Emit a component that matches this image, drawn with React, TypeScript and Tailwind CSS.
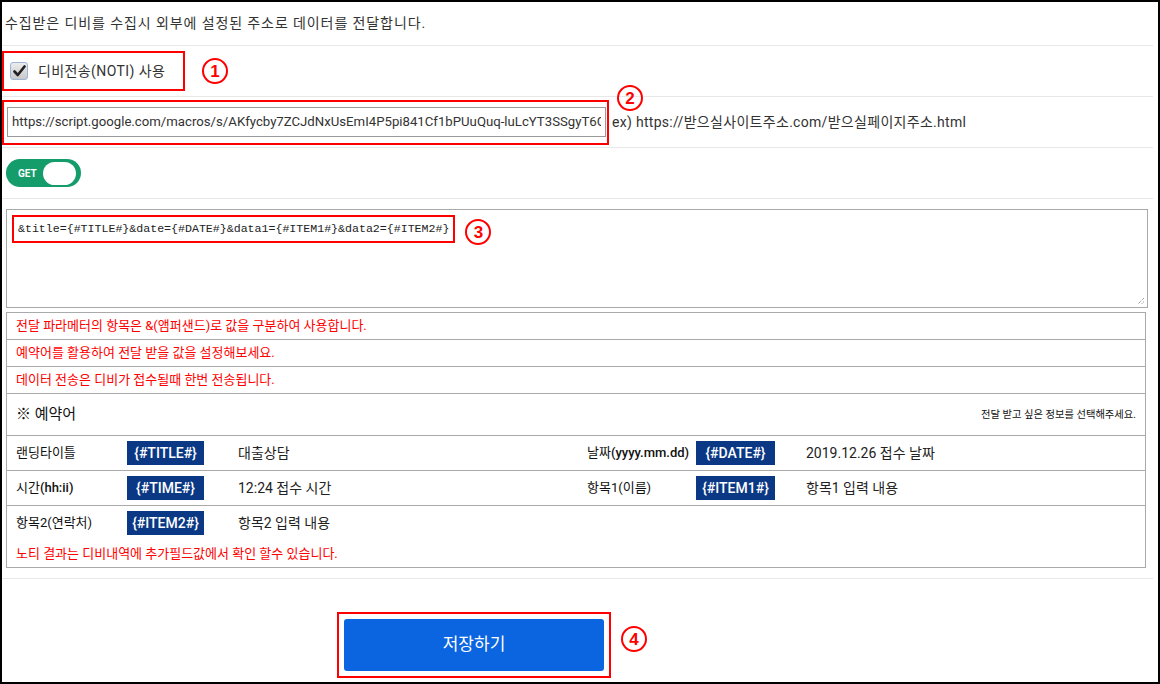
import React from "react";

const CircleNum = ({ n }: { n: string }) => (
  <span className="inline-flex h-[26px] w-[26px] items-center justify-center rounded-full border-[2.5px] border-[#ff0000] text-[17px] font-bold leading-none text-[#ff0000] font-['Liberation_Sans',sans-serif]">
    {n}
  </span>
);

const Badge = ({ children, w }: { children: React.ReactNode; w: string }) => (
  <div className={`${w} flex h-[24px] items-center justify-center bg-[#0a3885] text-[14px] font-medium text-white`}>
    {children}
  </div>
);

// latin runs in the labels look bolder than the hangul
const Label = ({ text }: { text: string }) => {
  const parts = text.split(/([A-Za-z:.()]+[A-Za-z:.()]*)/).filter(Boolean);
  return (
    <>
      {parts.map((p, i) =>
        /[A-Za-z]/.test(p) ? (
          <span key={i} className="font-medium">
            {p}
          </span>
        ) : (
          <span key={i}>{p}</span>
        )
      )}
    </>
  );
};

const RESERVED = [
  [
    { label: "랜딩타이틀", code: "{#TITLE#}", value: "대출상담" },
    { label: "날짜(yyyy.mm.dd)", code: "{#DATE#}", value: "2019.12.26 접수 날짜" },
  ],
  [
    { label: "시간(hh:ii)", code: "{#TIME#}", value: "12:24 접수 시간" },
    { label: "항목1(이름)", code: "{#ITEM1#}", value: "항목1 입력 내용" },
  ],
  [{ label: "항목2(연락처)", code: "{#ITEM2#}", value: "항목2 입력 내용" }],
];

export default function App() {
  return (
    <div className="box-border h-[684px] w-[1160px] overflow-hidden border-2 border-black bg-white font-['Roboto','Noto_Sans_CJK_KR',sans-serif] text-[#222]">
      <div className="pr-[5px]">
        {/* intro */}
        <div className="flex h-[44px] items-center border-b border-[#e8e8e8] pl-[3px] text-[14px] tracking-[0.9px] text-[#333]">
          수집받은 디비를 수집시 외부에 설정된 주소로 데이터를 전달합니다.
        </div>

        {/* noti checkbox */}
        <div className="flex h-[51px] items-center border-b border-[#e8e8e8]">
          <div className="flex h-[40px] w-[183px] items-center gap-[10px] border-2 border-[#ff0000] pl-[6px]">
            <div className="flex h-[18px] w-[18px] items-center justify-center rounded-[3px] border border-[#9db6d8] bg-gradient-to-b from-[#ececec] to-[#c9c9c9]">
              <svg width="13" height="12" viewBox="0 0 13 12">
                <path d="M1.5 6.5 L4.8 10 L11.5 1.5" fill="none" stroke="#222" strokeWidth="2.6" strokeLinecap="round" strokeLinejoin="round" />
              </svg>
            </div>
            <span className="text-[14px] tracking-[0.4px] text-[#333]">디비전송(NOTI) 사용</span>
          </div>
          <div className="ml-[17px]">
            <CircleNum n="1" />
          </div>
        </div>

        {/* url */}
        <div className="relative flex h-[51px] items-center border-b border-[#e8e8e8]">
          <div className="flex h-[45px] w-[607px] items-start border-2 border-[#ff0000] pl-[3px] pt-[5px]">
            <input
              readOnly
              value="https://script.google.com/macros/s/AKfycby7ZCJdNxUsEmI4P5pi841Cf1bPUuQuq-luLcYT3SSgyT6G/exec"
              className="h-[30px] w-[599px] border border-[#999] bg-white px-[4px] text-[13.2px] text-[#333] outline-none"
            />
          </div>
          <span className="ml-[3px] text-[14px] tracking-[0.3px] text-[#333]">ex) https://받으실사이트주소.com/받으실페이지주소.html</span>
          <div className="absolute left-[615px] top-[-12px]">
            <CircleNum n="2" />
          </div>
        </div>

        {/* method toggle */}
        <div className="flex h-[51px] items-center border-b border-[#e8e8e8] pl-[4px]">
          <div className="flex h-[28px] w-[75px] items-center justify-between rounded-full bg-[#149c6b] pl-[12px] pr-[5px]">
            <span className="text-[10px] font-bold text-white">GET</span>
            <span className="h-[23px] w-[33px] rounded-full bg-white" />
          </div>
        </div>

        {/* params */}
        <div className="border-b border-[#e8e8e8] px-[4px] pb-[10px] pt-[10px]">
          <div className="relative h-[99px] w-[1142px] border border-[#a9a9a9] p-[5px]">
            <div className="flex items-start gap-[10px]">
              <div className="flex h-[28px] items-center border-2 border-[#ff0000] px-[4px] font-['Liberation_Mono',monospace] text-[11.6px] text-[#222]">
                &amp;title={"{#TITLE#}"}&amp;date={"{#DATE#}"}&amp;data1={"{#ITEM1#}"}&amp;data2={"{#ITEM2#}"}
              </div>
              <div className="mt-[4px]">
                <CircleNum n="3" />
              </div>
            </div>
            <svg className="absolute bottom-[2px] right-[2px]" width="9" height="9" viewBox="0 0 9 9">
              <path d="M8 2 L2 8 M8 5.5 L5.5 8" stroke="#777" strokeWidth="1" strokeDasharray="1 1" />
            </svg>
          </div>

          <div className="mt-[4px] w-[1140px] border border-[#aaa] text-[13px]">
            <div className="flex h-[27px] items-center border-b border-[#aaa] pl-[9px] text-[#ff0000]">
              전달 파라메터의 항목은 &amp;(앰퍼샌드)로 값을 구분하여 사용합니다.
            </div>
            <div className="flex h-[27px] items-center border-b border-[#aaa] pl-[9px] text-[#ff0000]">
              예약어를 활용하여 전달 받을 값을 설정해보세요.
            </div>
            <div className="flex h-[27px] items-center border-b border-[#aaa] pl-[9px] text-[#ff0000]">
              데이터 전송은 디비가 접수될때 한번 전송됩니다.
            </div>
            <div className="flex h-[42px] items-center justify-between border-b border-[#aaa] pl-[9px] pr-[9px]">
              <span className="text-[15px] text-[#111]">※ 예약어</span>
              <span className="text-[10.3px] text-[#111]">전달 받고 싶은 정보를 선택해주세요.</span>
            </div>
            {RESERVED.map((row, i) => (
              <div key={i} className={i < RESERVED.length - 1 ? "border-b border-[#aaa]" : ""}>
                <div className="grid h-[34px] grid-cols-2 items-center">
                  {row.map((item, j) => (
                    <div key={item.label} className={`flex items-center ${j === 0 ? "pl-[9px]" : "pl-[11px]"}`}>
                      <span className={`${j === 0 ? "w-[111px]" : "w-[109px]"} text-[#111]`}>
                        <Label text={item.label} />
                      </span>
                      <Badge w={j === 0 ? "w-[77px]" : "w-[79px]"}>{item.code}</Badge>
                      <span className={`${j === 0 ? "ml-[34px]" : "ml-[31px]"} text-[14px] text-[#222]`}>{item.value}</span>
                    </div>
                  ))}
                </div>
                {i === RESERVED.length - 1 && (
                  <div className="flex h-[27px] items-center pl-[9px] text-[#ff0000]">
                    노티 결과는 디비내역에 추가필드값에서 확인 할수 있습니다.
                  </div>
                )}
              </div>
            ))}
          </div>
        </div>

        {/* save */}
        <div className="flex items-start pl-[335px] pt-[33px]">
          <div className="border-2 border-[#ff0000] p-[5px]">
            <button className="flex h-[52px] w-[260px] items-center justify-center rounded-[3px] bg-[#0b64e0] text-[17px] text-white">
              저장하기
            </button>
          </div>
          <div className="ml-[10px] mt-[14px]">
            <CircleNum n="4" />
          </div>
        </div>
      </div>
    </div>
  );
}
